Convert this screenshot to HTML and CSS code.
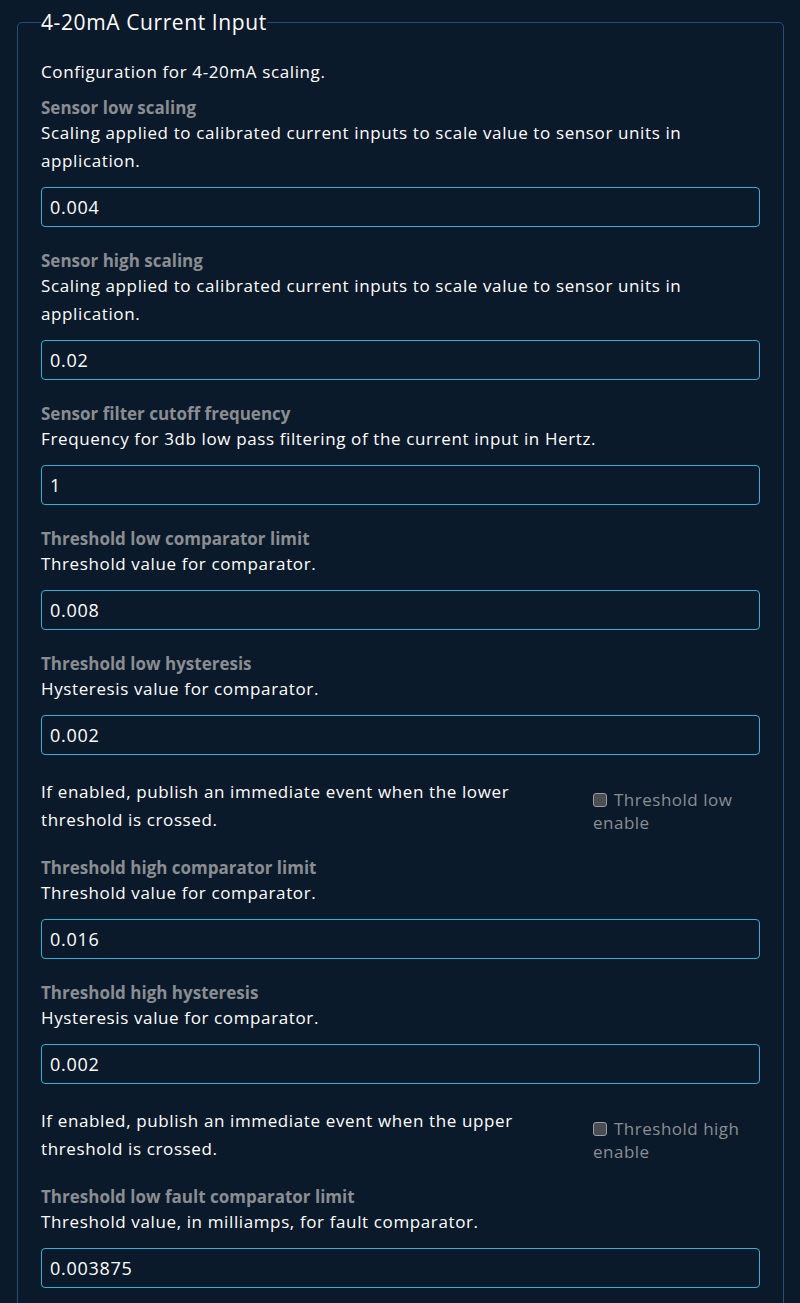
FILE: index.html
```html
<!DOCTYPE html>
<html lang="en">
<head>
<meta charset="utf-8">
<title>4-20mA Current Input</title>
<link rel="stylesheet" href="styles.css">
</head>
<body>
<fieldset class="panel">
  <legend class="panel-title">4-20mA Current Input</legend>
  <p class="intro">Configuration for 4-20mA scaling.</p>

  <div class="field">
    <label class="field-label">Sensor low scaling</label>
    <p class="field-desc">Scaling applied to calibrated current inputs to scale value to sensor units in application.</p>
    <input class="field-input" type="text" value="0.004">
  </div>

  <div class="field">
    <label class="field-label">Sensor high scaling</label>
    <p class="field-desc">Scaling applied to calibrated current inputs to scale value to sensor units in application.</p>
    <input class="field-input" type="text" value="0.02">
  </div>

  <div class="field">
    <label class="field-label">Sensor filter cutoff frequency</label>
    <p class="field-desc">Frequency for 3db low pass filtering of the current input in Hertz.</p>
    <input class="field-input" type="text" value="1">
  </div>

  <div class="field">
    <label class="field-label">Threshold low comparator limit</label>
    <p class="field-desc">Threshold value for comparator.</p>
    <input class="field-input" type="text" value="0.008">
  </div>

  <div class="field">
    <label class="field-label">Threshold low hysteresis</label>
    <p class="field-desc">Hysteresis value for comparator.</p>
    <input class="field-input" type="text" value="0.002">
  </div>

  <div class="check-row">
    <p class="check-desc">If enabled, publish an immediate event when the lower threshold is crossed.</p>
    <label class="check-label"><span class="check-box"></span>Threshold low enable</label>
  </div>

  <div class="field">
    <label class="field-label">Threshold high comparator limit</label>
    <p class="field-desc">Threshold value for comparator.</p>
    <input class="field-input" type="text" value="0.016">
  </div>

  <div class="field">
    <label class="field-label">Threshold high hysteresis</label>
    <p class="field-desc">Hysteresis value for comparator.</p>
    <input class="field-input" type="text" value="0.002">
  </div>

  <div class="check-row">
    <p class="check-desc">If enabled, publish an immediate event when the upper threshold is crossed.</p>
    <label class="check-label"><span class="check-box"></span>Threshold high enable</label>
  </div>

  <div class="field">
    <label class="field-label">Threshold low fault comparator limit</label>
    <p class="field-desc">Threshold value, in milliamps, for fault comparator.</p>
    <input class="field-input" type="text" value="0.003875">
  </div>
</fieldset>
</body>
</html>
```

FILE: styles.css
```css
html, body {
  margin: 0;
  padding: 0;
  background: #0b1a2a;
}
body {
  padding: 9px 16px 0 17px;
  font-family: "Open Sans", "Liberation Sans", sans-serif;
  font-size: 17px;
  letter-spacing: 0.62px;
  color: #ffffff;
}
.panel {
  margin: 0;
  border: 1px solid #22507a;
  border-radius: 5px;
  padding: 23px 23px 20px 23px;
  min-width: 0;
}
.panel-title {
  padding: 0;
  font-size: 21px;
  letter-spacing: 0.6px;
  line-height: 26px;
  font-weight: 500;
  color: #ffffff;
}
.intro {
  margin: 0 0 11px 0;
  line-height: 28px;
}
.field {
  display: flex;
  flex-direction: column;
  margin-bottom: 23px;
}
.field-label {
  font-weight: 700;
  letter-spacing: 0;
  color: #8a8d91;
  line-height: 22px;
}
.field-desc {
  margin: 0 0 12px 0;
  line-height: 28px;
}
.field-input {
  box-sizing: border-box;
  width: 100%;
  height: 40px;
  margin: 0;
  padding: 0 8px;
  background: #0b1a2a;
  color: #ffffff;
  border: 1.5px solid #3aaed6;
  border-radius: 4px;
  font-family: inherit;
  font-size: 18px;
  letter-spacing: 0.7px;
  outline: none;
}
.check-row {
  display: flex;
  align-items: flex-start;
  margin-bottom: 23px;
}
.check-desc {
  margin: 0;
  line-height: 28px;
  width: 480px;
}
.check-label {
  margin-left: 72px;
  margin-top: 10px;
  flex: 1;
  line-height: 23px;
  letter-spacing: 0.5px;
  color: #8a8d91;
}
.check-box {
  display: inline-block;
  box-sizing: border-box;
  width: 14px;
  height: 14px;
  margin-right: 7px;
  vertical-align: -1px;
  background: #4a4d52;
  border: 1.5px solid #9a9da2;
  border-radius: 3px;
}
```
